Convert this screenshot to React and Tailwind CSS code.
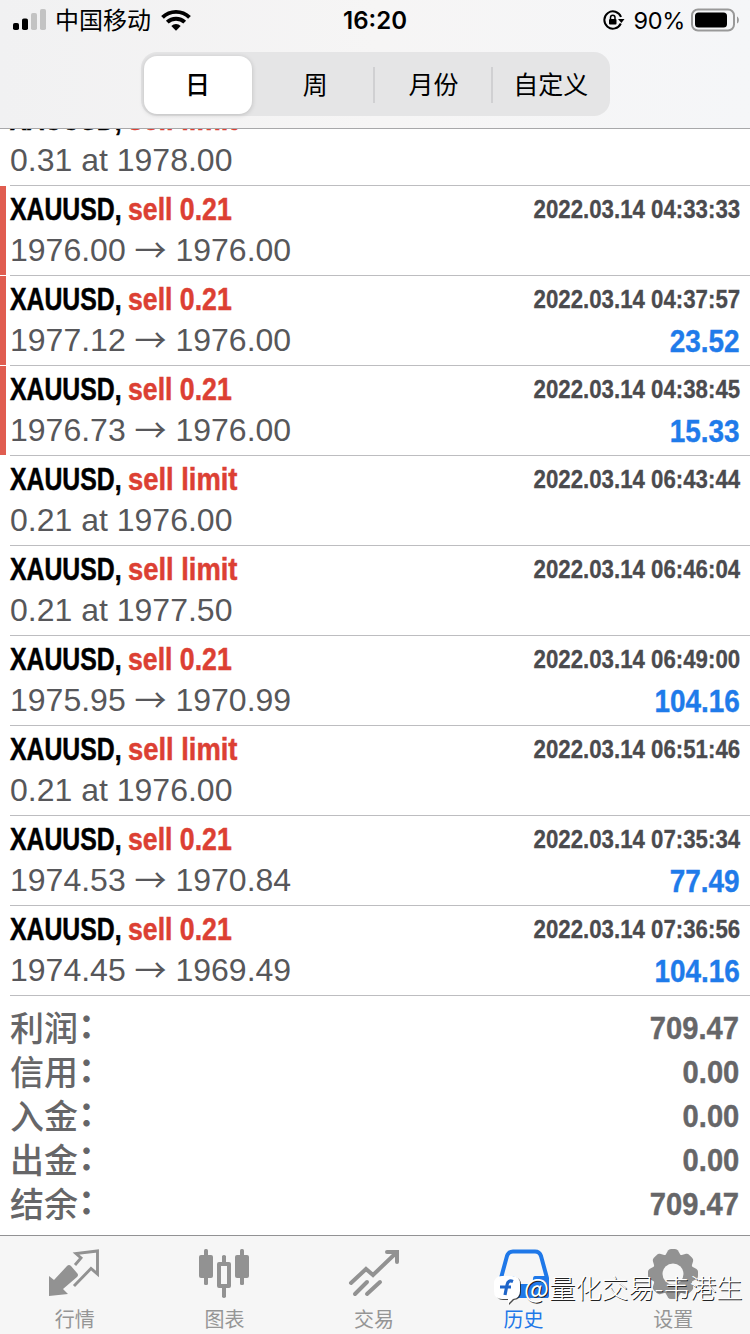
import React from "react";

const deals = [
  { kind: "sell limit", volume: "0.31", price: "1978.00", time: "2022.03.14 04:33:30" },
  { kind: "sell 0.21", open: "1976.00", close: "1976.00", time: "2022.03.14 04:33:33", marked: true },
  { kind: "sell 0.21", open: "1977.12", close: "1976.00", time: "2022.03.14 04:37:57", profit: "23.52", marked: true },
  { kind: "sell 0.21", open: "1976.73", close: "1976.00", time: "2022.03.14 04:38:45", profit: "15.33", marked: true },
  { kind: "sell limit", volume: "0.21", price: "1976.00", time: "2022.03.14 06:43:44" },
  { kind: "sell limit", volume: "0.21", price: "1977.50", time: "2022.03.14 06:46:04" },
  { kind: "sell 0.21", open: "1975.95", close: "1970.99", time: "2022.03.14 06:49:00", profit: "104.16" },
  { kind: "sell limit", volume: "0.21", price: "1976.00", time: "2022.03.14 06:51:46" },
  { kind: "sell 0.21", open: "1974.53", close: "1970.84", time: "2022.03.14 07:35:34", profit: "77.49" },
  { kind: "sell 0.21", open: "1974.45", close: "1969.49", time: "2022.03.14 07:36:56", profit: "104.16" },
];

const totals = [
  ["利润", "709.47"],
  ["信用", "0.00"],
  ["入金", "0.00"],
  ["出金", "0.00"],
  ["结余", "709.47"],
];

function StatusBar() {
  return (
    <div className="grid h-10 grid-cols-3 items-center">
      <div className="flex items-center pl-[13px]">
        <svg width="34" height="22" viewBox="0 0 34 22">
          <rect x="0" y="14" width="6" height="7" rx="1.8" fill="#000" />
          <rect x="9" y="9.500" width="6" height="11.500" rx="1.800" fill="#000" />
          <rect x="18" y="4" width="6" height="17" rx="1.800" fill="#c3c3c3" />
          <rect x="27" y="0" width="6" height="21" rx="1.800" fill="#c3c3c3" />
        </svg>
        <span className="ml-2 translate-y-px text-[24px] leading-10">中国移动</span>
        <svg className="ml-[10px]" width="30" height="22" viewBox="0 0 30 22" fill="none" stroke="#000" strokeWidth="3.900">
          <path d="M1.500 8.300C9 1 21 1 28.500 8.300" />
          <path d="M6.300 13.200C11 8.600 19 8.600 23.700 13.200" />
          <path d="M10.300 17C13 14.200 17 14.200 19.700 17L15 21.800Z" fill="#000" stroke="none" />
        </svg>
      </div>
      <div className="translate-y-px text-center font-[Inter] text-[24px] leading-10 font-semibold">16:20</div>
      <div className="flex items-center justify-end pr-[11px]">
        <svg width="22" height="20" viewBox="0 0 22 20" fill="none" stroke="#000" strokeWidth="2">
          <path d="M17.800 13.500A8.600 8.600 0 1 1 18 7" />
          <path d="M15 9H21.500L18.400 13Z" fill="#000" stroke="none" />
          <rect x="6" y="9" width="7.500" height="5.500" rx="1" fill="#000" stroke="none" />
          <path d="M7.500 9V7.500a2.250 2.250 0 0 1 4.500 0V9" strokeWidth="1.500" />
        </svg>
        <span className="ml-[8px] translate-y-px font-[Inter] text-[23.500px] leading-10 tracking-[-0.300px]">90%</span>
        <svg className="ml-[6px]" width="48" height="24" viewBox="0 0 48 24">
          <rect x="1" y="1.500" width="42" height="21" rx="6" fill="none" stroke="#999" strokeWidth="2" />
          <rect x="4" y="4.500" width="32" height="15" rx="3.500" fill="#000" />
          <path d="M46 8.500c2.500 1 2.500 6 0 7z" fill="#999" />
        </svg>
      </div>
    </div>
  );
}

function Segments() {
  return (
    <div className="mx-auto mt-3 grid h-16 w-[469px] grid-cols-4 rounded-[16px] bg-[#e5e5e6] text-center text-[25px] leading-[64px]">
      <div className="my-1 ml-[3px] mr-[6px] rounded-[13px] bg-white font-medium leading-[58px] shadow-[0_1px_5px_rgba(0,0,0,0.18)]">日</div>
      <div className="flex items-center justify-between"><span /><span>周</span><i className="h-9 w-[2px] bg-[#d0d0d2]" /></div>
      <div className="flex translate-x-px items-center justify-between"><span /><span>月份</span><i className="h-9 w-[2px] bg-[#d0d0d2]" /></div>
      <div className="translate-y-px">自定义</div>
    </div>
  );
}

function Deal({ deal }) {
  return (
    <li className="flex h-[90px] shrink-0">
      <span className={deal.marked ? "mb-px w-[6px] bg-[#e05d50]" : "w-[6px]"} />
      <div className="ml-1 flex-1 border-b border-[#bdbdc0] pr-[10px]">
        <div className="flex h-[46px] items-start justify-between font-bold whitespace-nowrap">
          <div className="flex pt-[3px] text-[32px] leading-10 [-webkit-text-stroke:0.500px]">
            <span className="w-[118px] origin-left scale-x-[0.775] text-black">XAUUSD,</span>
            <span className={deal.volume ? "origin-left scale-x-[0.855] text-[#dc4033]" : "origin-left scale-x-[0.833] text-[#dc4033]"}>{deal.kind}</span>
          </div>
          <span className="origin-right scale-x-[0.89] pt-[3px] text-[25px] leading-10 text-[#4b4b4e] [-webkit-text-stroke:0.300px]">{deal.time}</span>
        </div>
        <div className="flex items-start justify-between whitespace-nowrap">
          <span className="-mt-[2px] text-[32px] leading-10 text-[#57575a]">
            {deal.open ? (
              <>{deal.open} <span className="relative top-px font-['Noto_Sans_CJK_SC'] leading-none">→</span> {deal.close}</>
            ) : (
              <>{deal.volume} at {deal.price}</>
            )}
          </span>
          {deal.profit && <span className="origin-right scale-x-90 text-[31px] leading-10 font-bold text-[#1f7bea] [-webkit-text-stroke:0.400px]">{deal.profit}</span>}
        </div>
      </div>
    </li>
  );
}

const QuotesIcon = () => (
  <svg width="52" height="50" viewBox="0 0 52 50">
    <path d="M0 47V27L5 31 18 17Q20 15 22 17L28 24Q30 26 28 28L14 40 19 45Z" fill="#929292" />
    <path d="M26 16 32 9 27 4.500 48.500 2V25L42 19.500 25 37" fill="none" stroke="#929292" strokeWidth="2.900" />
  </svg>
);

const ChartIcon = () => (
  <svg width="52" height="50" viewBox="0 0 52 50" fill="#929292">
    <rect x="6" y="0" width="4" height="36" rx="1.500" />
    <rect x="1" y="6" width="14" height="23" rx="2" />
    <rect x="42" y="0" width="4" height="36" rx="1.500" />
    <rect x="37" y="6" width="14" height="23" rx="2" />
    <path d="M24 7q2-2 4 0v6h3q2 0 2 2v22q0 2-2 2h-3v9q-2 2-4 0v-9h-3q-2 0-2-2V15q0-2 2-2h3zM23 17v18h6V17z" fillRule="evenodd" />
  </svg>
);

const TradeIcon = () => (
  <svg width="52" height="50" viewBox="0 0 52 50" fill="none" stroke="#929292" strokeWidth="4" strokeLinecap="round" strokeLinejoin="miter">
    <path d="M3 34 18 20 25 26 48 4M39 3H49V13" />
    <path d="M7 45 19 33M19 45 32 33" />
  </svg>
);

const HistoryIcon = () => (
  <svg width="52" height="50" viewBox="0 0 52 50">
    <path d="M3 47V29L9 7Q10.500 2.500 15 2.500H37Q41.500 2.500 43 7L49 29V47Z" fill="none" stroke="#1f78e8" strokeWidth="4" strokeLinejoin="round" />
    <path d="M2 27H15Q17 27 17 30Q17 35 22 35H30Q35 35 35 30Q35 27 37 27H50V49H2Z" fill="#1f78e8" />
  </svg>
);

const SettingsIcon = () => (
  <svg width="52" height="50" viewBox="0 0 52 50">
    <g fill="#929292">
      <circle cx="26" cy="25" r="20.500" />
      {[0, 45, 90, 135, 180, 225, 270, 315].map((a) => (
        <path key={a} d="M18 7 21 1.500Q22 0 24 0H28Q30 0 31 1.500L34 7Z" transform={`rotate(${a} 26 25)`} />
      ))}
    </g>
    <circle cx="26" cy="25" r="10.500" fill="#f6f6f6" />
  </svg>
);

const tabs = [
  ["行情", QuotesIcon],
  ["图表", ChartIcon],
  ["交易", TradeIcon],
  ["历史", HistoryIcon],
  ["设置", SettingsIcon],
];

export default function App() {
  return (
    <div className="relative flex h-[1334px] w-[750px] flex-col overflow-hidden bg-white font-['Liberation_Sans','Noto_Sans_CJK_SC',sans-serif] text-black">
      <header className="h-[129px] shrink-0 border-b border-[#a8a8aa] bg-linear-to-r from-[#f1f1f2] via-[#f6f5f5] to-[#f5f6f8]">
        <StatusBar />
        <Segments />
      </header>

      <ul className="flex h-[867px] shrink-0 flex-col justify-end overflow-hidden">
        {deals.map((deal, i) => <Deal key={i} deal={deal} />)}
      </ul>

      <dl className="h-[239px] shrink-0 pt-[10px] pr-[11px] pl-[10px] text-[#666668]">
        {totals.map(([name, value]) => (
          <div key={name} className="flex h-11 items-center justify-between">
            <dt className="pt-[2px] text-[34px] leading-[44px] font-medium">{name}<span className="relative -top-[3px] font-bold">：</span></dt>
            <dd className="origin-right scale-x-[0.91] text-[32px] leading-[44px] font-bold [-webkit-text-stroke:0.400px]">{value}</dd>
          </div>
        ))}
      </dl>

      <nav className="grid flex-1 grid-cols-5 border-t border-[#929294] bg-[#f6f6f6] pr-[2px]">
        {tabs.map(([name, Icon]) => (
          <div key={name} className="flex flex-col items-center pt-[13px]">
            <Icon />
            <span className={name === "历史" ? "mt-[7px] text-[20px] leading-[28px] text-[#1f78e8]" : "mt-[7px] text-[20px] leading-[28px] text-[#959595]"}>{name}</span>
          </div>
        ))}
      </nav>

      <div className="absolute top-[1267px] left-[495px] flex items-center whitespace-nowrap">
        <svg className="overflow-visible" width="29" height="40" viewBox="0 0 29 40">
          <path d="M8 10H18Q26 10 26 18V25Q26 32 19 33L14 38V33H8Q1 33 1 25V18Q1 10 8 10Z" fill="#222" opacity=".8" />
          <path d="M7 9H17Q25 9 25 17V24Q25 31 18 32L13 37V32H7Q-1 32 -1 24V17Q-1 9 7 9Z" fill="#fff" />
          <path d="M18 14.500Q13 12.500 12 18L10 28M5 20H16" fill="none" stroke="#1f65c8" strokeWidth="3.200" />
        </svg>
        <span className="font-['Noto_Sans_CJK_SC'] text-[26.400px] leading-10 font-light text-white [text-shadow:1px_1px_0.500px_#222]"><span className="font-normal">@</span>量化交易-韦港生</span>
      </div>
    </div>
  );
}
